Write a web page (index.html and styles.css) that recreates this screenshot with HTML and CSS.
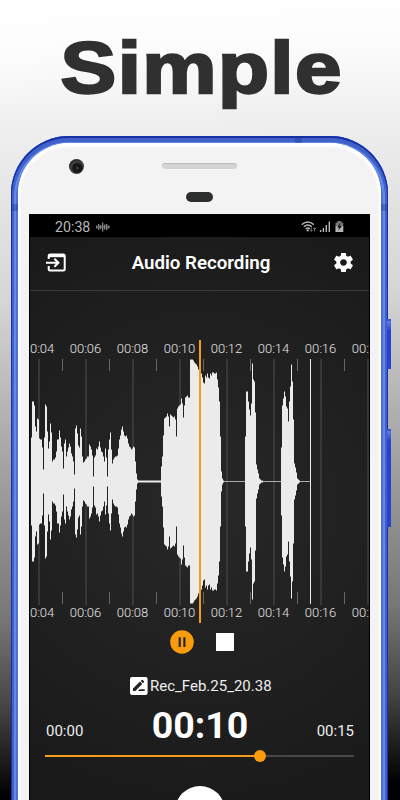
FILE: index.html
```html
<!DOCTYPE html>
<html lang="en">
<head>
  <meta charset="UTF-8">
  <meta name="viewport" content="width=device-width, initial-scale=1.0">
  <title>Audio Recording</title>
  <link rel="stylesheet" href="styles.css">
</head>
<body>

<h1 class="headline"><span>Simple</span></h1>

<div class="phone">
  <div class="side-btn power"></div>
  <div class="side-btn volume"></div>
  <div class="band band-left"></div>
  <div class="band band-right"></div>
  <div class="band band-top"></div>
  <div class="face">
    <div class="top-bezel">
      <span class="camera"></span>
      <span class="speaker"></span>
      <span class="sensor"></span>
    </div>

    <div class="screen">
      <div class="status-bar">
        <span>20:38</span>
        <svg class="status-wave" width="14" height="12" viewBox="0 0 14 12">
          <path d="M.7 4.5v3M2.7 3v6M4.7 4v4M6.7 1.5v9M8.7 3.5v5M10.7 3v6M12.7 4.5v3" stroke="#888" stroke-width="1.3"/>
          <path d="M0 6h14" stroke="#888" stroke-width=".8"/>
        </svg>
        <svg class="status-icons" width="44" height="14" viewBox="0 0 44 14">
          <g fill="none" stroke="#b5b5b5" stroke-width="1.4">
            <path d="M.8 4.6Q6.7-.6 12.8 4.6M2.8 6.8q4-3.5 8 0M4.7 8.9q2.1-1.8 4.2 0"/>
          </g>
          <circle cx="6.8" cy="10.4" r="1.1" fill="#b5b5b5"/>
          <path d="M10.3 7.5v3.7M9 10l1.3 1.4 1.3-1.4M13.5 11.4V7.7M12.2 9l1.3-1.4L14.8 9" fill="none" stroke="#777" stroke-width=".9"/>
          <path d="M19.6 10v2M22.4 8v4M25.3 5v7M28.3 1.5V12" stroke="#b5b5b5" stroke-width="1.4"/>
          <path d="M34.6 2.5h2V1h3.6v1.5h2V12h-7.6z" fill="#777"/>
          <path d="M34.6 6h7.6v6h-7.6z" fill="#b5b5b5"/>
          <path d="M39.5 2.8 36 7.6h2.2l-.9 3.2 3.6-4.7h-2.2z" fill="#111"/>
        </svg>
      </div>

      <div class="app-bar">
        <svg width="20" height="20" viewBox="0 0 20 20" fill="none" stroke="#fff">
          <path d="M2.7 6V3q0-1.5 1.5-1.5h13q1.5 0 1.5 1.5v13q0 1.5-1.5 1.5h-13q-1.5 0-1.5-1.5v-3" stroke-width="2"/>
          <path d="M2.6 2.8h16" stroke-width="2.8"/>
          <path d="M0 9.8h12M8.4 5.8l4 4-4 4" stroke-width="2.1"/>
        </svg>
        <h2>Audio Recording</h2>
        <svg width="23" height="23" viewBox="0 0 24 24" fill="#fff">
          <path d="M19.43 12.98c.04-.32.07-.64.07-.98s-.03-.66-.07-.98l2.11-1.65c.19-.15.24-.42.12-.64l-2-3.46c-.12-.22-.39-.3-.61-.22l-2.49 1c-.52-.4-1.08-.73-1.69-.98l-.38-2.65C14.46 2.18 14.25 2 14 2h-4c-.25 0-.46.18-.49.42l-.38 2.65c-.61.25-1.17.59-1.69.98l-2.49-1c-.23-.09-.49 0-.61.22l-2 3.46c-.13.22-.07.49.12.64l2.11 1.65c-.04.32-.07.65-.07.98s.03.66.07.98l-2.11 1.65c-.19.15-.24.42-.12.64l2 3.46c.12.22.39.3.61.22l2.49-1c.52.4 1.08.73 1.69.98l.38 2.65c.03.24.24.42.49.42h4c.25 0 .46-.18.49-.42l.38-2.65c.61-.25 1.17-.59 1.69-.98l2.49 1c.23.09.49 0 .61-.22l2-3.46c.12-.22.07-.49-.12-.64l-2.11-1.65zM12 15.5c-1.93 0-3.5-1.57-3.5-3.5s1.57-3.5 3.5-3.5 3.5 1.57 3.5 3.5-1.57 3.5-3.5 3.5z"/>
        </svg>
      </div>

      <div class="wave">
        <div class="times">
          <span>00:04</span><span>00:06</span><span>00:08</span><span>00:10</span><span>00:12</span><span>00:14</span><span>00:16</span><span>00:18</span>
        </div>
        <svg id="waveform" width="339" height="246"></svg>
        <div class="times times-bottom">
          <span>00:04</span><span>00:06</span><span>00:08</span><span>00:10</span><span>00:12</span><span>00:14</span><span>00:16</span><span>00:18</span>
        </div>
        <div class="playhead"></div>
      </div>

      <div class="controls">
        <svg width="24" height="24" viewBox="0 0 24 24">
          <circle cx="12" cy="12" r="11.8" fill="#f89c0e"/>
          <path d="M9.7 7.3v9.6M14.4 7.3v9.6" stroke="#222" stroke-width="2.1"/>
        </svg>
        <span class="stop"></span>
      </div>

      <div class="file-name">
        <svg width="18" height="18" viewBox="0 0 18 18">
          <rect width="17.6" height="18" rx="2" fill="#fff"/>
          <path d="M3 13.9v-2.3l7-7 2.3 2.3-7 7zM10.7 3.9l1-1q.5-.4 1 0l1.3 1.3q.4.5 0 1l-1 1z" fill="#222"/>
          <path d="M8 13.9l1.5-1.6h5.2v1.6z" fill="#222"/>
        </svg>
        <span>Rec_Feb.25_20.38</span>
      </div>

      <div class="timer">
        <span>00:00</span>
        <strong>00:10</strong>
        <span>00:15</span>
      </div>

      <div class="progress">
        <div class="progress-done"></div>
        <div class="knob"></div>
      </div>

      <div class="record"></div>
    </div>
  </div>
</div>

<script>
  // half height of the wave, one value per pixel column
  const parts = [
    { x: 1, amps: [44,80,80,76,55,50,63,62,43,42,42,34,12,44,77,75,50,33,40,58,49,20,22,22,24,30,42,42,51,44,35,30,13,38,42,25,30,34,38,35,28,25,20,7,53,56,48,36,34,53,45,25,19,20,22,23,25,25,37,35,32,26,5,24,26,33,32,35,40,34,30,29,25,20,33,24,5,32,42,49,32,18,22,24,25,25,26,33,42,46,52,55,50,46,45,46,43,38,35,34,32,33,35,34,20,8,2] },
    { x: 131, amps: [15,25,46,63,64,65,68,65,55,67,66,65,64,65,62,45,73,75,76,77,83,78,64,76,84,85,86,84,84,122,122,122,121,119,118,117,115,112,111,112,108,104,99,98,106,104,108,104,103,108,106,109,109,108,108,109,102,94,80,45,10,3,1] },
    { x: 215, amps: [45,90,90,80,72,66,78,118,102,100,69,17,12,8,3,2,1,1] },
    { x: 251, amps: [34,76,83,90,85,75,73,60,80,95,117,100,62,18,14,9,3,2,1] }
  ];
  const mid = 122.5;
  let grid = '';
  for (let x = 9; x < 339; x += 47) {
    grid += `<path class="major" d="M${x} 0V246"/>`;
    grid += `<path class="minor" d="M${x + 23.5} 0v12m0 221v12"/>`;
  }
  let d = '';
  parts.forEach(part => {
    part.amps.forEach((a, i) => {
      d += `M${part.x + i} ${mid - a}h1v${a * 2}h-1z`;
    });
  });
  document.getElementById('waveform').innerHTML = grid +
    `<path class="quiet" d="M106 ${mid}H132"/>` +
    `<path class="silence" d="M190 ${mid}H281"/>` +
    `<path class="fill" d="${d}"/>` +
    `<path class="end" d="M280.5 0V245"/>`;
</script>

</body>
</html>
```

FILE: styles.css
```css
* {
  box-sizing: border-box;
}
body {
  margin: 0;
  width: 400px;
  height: 800px;
  overflow: hidden;
  font-family: Roboto, "Liberation Sans", sans-serif;
  color: #eee;
  background: linear-gradient(178deg, #fff 0%, #fcfcfc 7%, #efefef 16%, #d6d6d6 37%, #b0b0b0 52%, #777 76%, #444 87%, #000 98%);
}
.headline {
  height: 136px;
  margin: 0;
  padding-top: 28px;
  font-family: "Liberation Sans", Arial, sans-serif;
  font-size: 72px;
  line-height: 80px;
  font-weight: bold;
  text-align: center;
  color: #303030;
}
.headline span {
  display: inline-block;
  letter-spacing: 1.2px;
  -webkit-text-stroke: 2.4px #303030;
  transform: translateX(2px) scaleX(1.16);
}
.phone {
  position: relative;
  width: 377px;
  height: 664px;
  margin-left: 11px;
  padding: 7px 7px 0;
  border-radius: 58px 58px 0 0;
  background: #4a6fd6;
  box-shadow: inset 0 1px 0 1px #1730a8, inset 0 3px 0 3px #4062c8, inset 0 5px 0 5px #6489e6;
}
.face {
  height: 657px;
  padding: 0 11px;
  border-radius: 51px 51px 0 0;
  background: #f3f3f3;
  box-shadow: inset 0 2px 2px 2px #fff;
}
.side-btn {
  position: absolute;
  left: 376px;
  width: 4px;
  border-top: 2px solid #3456d8;
  background: linear-gradient(#5f7fe4, #2743cc 10px);
}
.power {
  top: 183px;
  height: 50px;
}
.volume {
  top: 293px;
  height: 98px;
}
.band {
  position: absolute;
  width: 7px;
  height: 7px;
  background: rgba(30, 50, 140, 0.35);
}
.band-left {
  left: 0;
  top: 68px;
}
.band-right {
  right: 0;
  top: 68px;
}
.band-top {
  left: 284px;
  top: 0;
}
.top-bezel {
  position: relative;
  height: 71px;
}
.camera {
  position: absolute;
  left: 40px;
  top: 16px;
  width: 15px;
  height: 15px;
  border-radius: 50%;
  background: radial-gradient(circle at 55% 60%, #666044 0, #15161a 15%, #15161a 35%, #444 50%, #2c2c2c 65%);
}
.speaker {
  position: absolute;
  left: 133px;
  top: 20px;
  width: 75px;
  height: 6px;
  border-radius: 3px;
  background: #d3d5d4;
  border-top: 1px solid #bbb;
}
.sensor {
  position: absolute;
  left: 157px;
  top: 49px;
  width: 27px;
  height: 10px;
  border-radius: 5px;
  background: #2b2e2d;
}
.screen {
  width: 341px;
  height: 586px;
  overflow: hidden;
  border-left: 1px solid #000;
  border-right: 1px solid #000;
  background: radial-gradient(circle at 50% 50%, #282828, #1a1a1a 90%);
}
.status-bar {
  display: flex;
  align-items: center;
  height: 23px;
  padding: 2px 24px 0 25px;
  font-size: 14.2px;
  color: #b8b8b8;
  background: #000;
}
.status-wave {
  margin-left: 6px;
}
.status-icons {
  margin-left: auto;
}
.app-bar {
  display: flex;
  align-items: center;
  justify-content: space-between;
  height: 54px;
  padding: 0 14px 2px 16px;
  border-bottom: 1px solid #3a3a3a;
}
.app-bar h2 {
  margin: 0 -1px 0 3px;
  font-size: 18.7px;
  font-weight: 600;
  color: #fff;
}
.wave {
  position: relative;
  height: 334px;
  padding-top: 49px;
  overflow: hidden;
}
.times {
  display: flex;
  height: 19px;
  width: 376px;
  margin-left: -15px;
  font-size: 13px;
  font-weight: 300;
  line-height: 18px;
  color: #e4e4e4;
}
.times-bottom {
  line-height: 15px;
}
.times span {
  flex: 0 0 47px;
  text-align: center;
}
#waveform {
  display: block;
}
.major {
  stroke: #494949;
  stroke-width: 1.2;
}
.minor {
  stroke: #666;
}
.quiet {
  stroke: #ebebeb;
  stroke-width: 2;
}
.silence {
  stroke: #aaa;
}
.fill {
  fill: #ebebeb;
}
.end {
  stroke: #ebebeb;
}
.playhead {
  position: absolute;
  left: 169px;
  top: 49px;
  width: 2px;
  height: 283px;
  background: #f29b1d;
}
.controls {
  display: flex;
  align-items: center;
  gap: 23px;
  height: 34px;
  padding-left: 140px;
}
.stop {
  width: 18px;
  height: 18px;
  margin-left: -1px;
  background: #fff;
}
.file-name {
  display: flex;
  align-items: center;
  gap: 2px;
  height: 54px;
  padding-left: 100px;
  font-size: 15px;
}
.timer {
  display: flex;
  align-items: center;
  justify-content: space-between;
  height: 26px;
  padding: 0 15px 0 16px;
  font-size: 15px;
}
.timer span {
  padding-top: 9px;
}
.timer strong {
  margin-top: -2px;
  font-size: 37.5px;
  line-height: 26px;
  color: #fff;
}
.progress {
  position: relative;
  height: 2px;
  margin: 16px 15px 0;
  background: #484848;
}
.progress-done {
  width: 215px;
  height: 2px;
  background: #f29b1d;
}
.knob {
  position: absolute;
  left: 209px;
  top: -5px;
  width: 12px;
  height: 12px;
  border-radius: 50%;
  background: #f89c0e;
}
.record {
  width: 50px;
  height: 50px;
  margin: 29px auto 0;
  border-radius: 50%;
  background: #fff;
}
```
